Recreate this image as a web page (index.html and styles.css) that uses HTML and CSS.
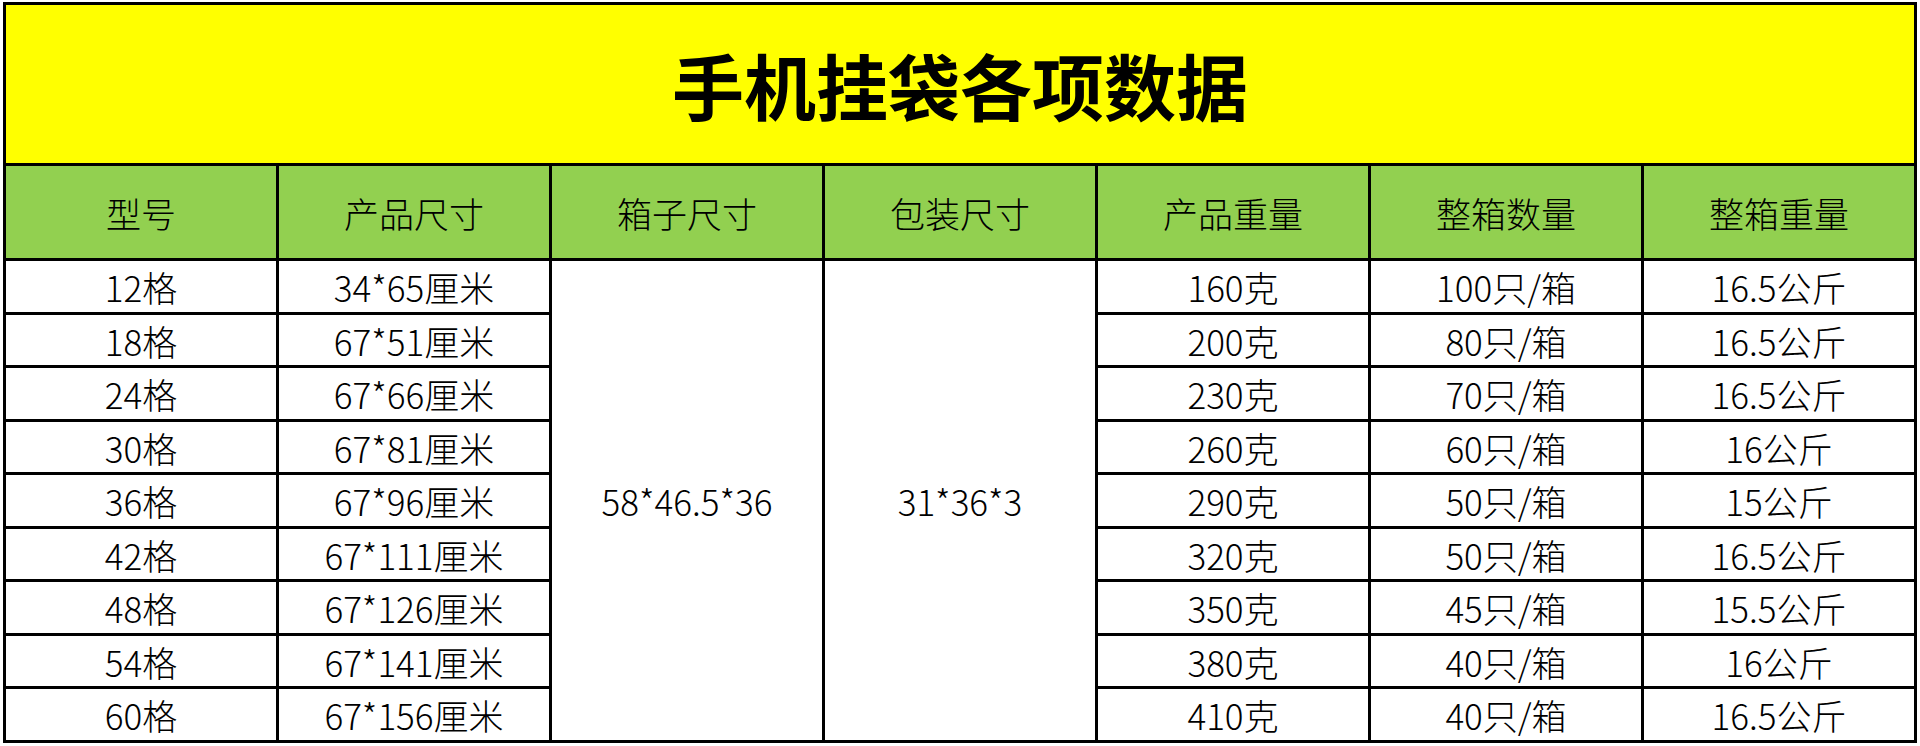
FILE: index.html
```html
<!DOCTYPE html>
<html lang="zh-CN">
<head>
<meta charset="utf-8">
<title>手机挂袋各项数据</title>
<link rel="stylesheet" href="styles.css">
</head>
<body>
<div class="sheet">
  <div class="cell title">手机挂袋各项数据</div>

  <div class="cell head">型号</div>
  <div class="cell head">产品尺寸</div>
  <div class="cell head">箱子尺寸</div>
  <div class="cell head">包装尺寸</div>
  <div class="cell head">产品重量</div>
  <div class="cell head">整箱数量</div>
  <div class="cell head">整箱重量</div>

  <div class="cell">12格</div>
  <div class="cell">34*65厘米</div>
  <div class="cell merged box">58*46.5*36</div>
  <div class="cell merged pack">31*36*3</div>
  <div class="cell">160克</div>
  <div class="cell">100只/箱</div>
  <div class="cell">16.5公斤</div>

  <div class="cell">18格</div>
  <div class="cell">67*51厘米</div>
  <div class="cell">200克</div>
  <div class="cell">80只/箱</div>
  <div class="cell">16.5公斤</div>

  <div class="cell">24格</div>
  <div class="cell">67*66厘米</div>
  <div class="cell">230克</div>
  <div class="cell">70只/箱</div>
  <div class="cell">16.5公斤</div>

  <div class="cell">30格</div>
  <div class="cell">67*81厘米</div>
  <div class="cell">260克</div>
  <div class="cell">60只/箱</div>
  <div class="cell">16公斤</div>

  <div class="cell">36格</div>
  <div class="cell">67*96厘米</div>
  <div class="cell">290克</div>
  <div class="cell">50只/箱</div>
  <div class="cell">15公斤</div>

  <div class="cell">42格</div>
  <div class="cell">67*111厘米</div>
  <div class="cell">320克</div>
  <div class="cell">50只/箱</div>
  <div class="cell">16.5公斤</div>

  <div class="cell">48格</div>
  <div class="cell">67*126厘米</div>
  <div class="cell">350克</div>
  <div class="cell">45只/箱</div>
  <div class="cell">15.5公斤</div>

  <div class="cell">54格</div>
  <div class="cell">67*141厘米</div>
  <div class="cell">380克</div>
  <div class="cell">40只/箱</div>
  <div class="cell">16公斤</div>

  <div class="cell">60格</div>
  <div class="cell">67*156厘米</div>
  <div class="cell">410克</div>
  <div class="cell">40只/箱</div>
  <div class="cell">16.5公斤</div>
</div>
</body>
</html>
```

FILE: styles.css
```css
html, body {
  margin: 0;
  padding: 0;
  background: #ffffff;
}

body {
  padding: 2px 4px 0 3px;
  font-family: "Noto Sans CJK SC", "Noto Sans", sans-serif;
  color: #000000;
}

.sheet {
  display: grid;
  grid-template-columns: repeat(7, 270px);
  grid-template-rows: 158px 92px 51px 50px 51px 50px 51px 50px 51px 50px 51px;
  gap: 3px;
  padding: 3px;
  background: #000000;
  width: max-content;
}

.cell {
  background: #ffffff;
  display: flex;
  align-items: center;
  justify-content: center;
  font-size: 35px;
  font-weight: 300;
  line-height: 1;
  white-space: nowrap;
}

.title {
  grid-column: 1 / -1;
  background: #ffff00;
  font-size: 72px;
  font-weight: 700;
}

.head {
  background: #92d050;
  font-size: 35px;
}

.merged {
  grid-row: 3 / span 9;
}

.box {
  grid-column: 3;
}

.pack {
  grid-column: 4;
}
```
